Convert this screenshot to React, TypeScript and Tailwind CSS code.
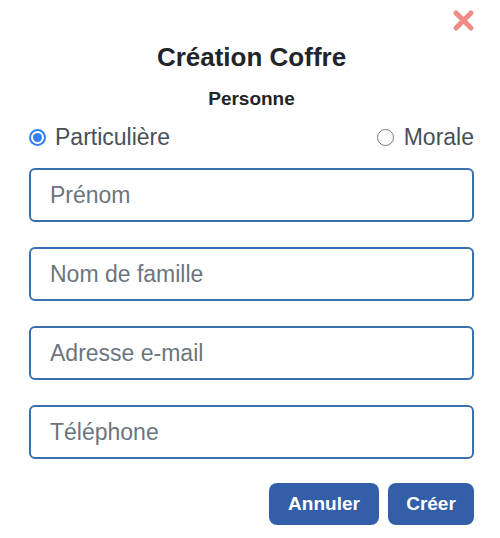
import React from "react";

const font = { fontFamily: '"Liberation Sans", Arial, Helvetica, sans-serif' };

function Field({ placeholder, first }: { placeholder: string; first?: boolean }) {
  return (
    <input
      type="text"
      placeholder={placeholder}
      className={`${first ? "" : "mt-[25px]"} block w-full h-[54px] border-2 border-[#3b70b0] rounded-[6px] pl-[19px] pr-[19px] text-[23px] text-[#212529] placeholder:text-[#6c757d] outline-none bg-white`}
      style={font}
    />
  );
}

export default function App() {
  const [kind, setKind] = React.useState<"p" | "m">("p");
  return (
    <div className="relative w-[500px] h-[538px] bg-white pl-[29px] pr-[26px]" style={font}>
      <button
        aria-label="Fermer"
        className="absolute top-[9px] right-[25px] w-[23px] h-[23px] flex items-center justify-center"
      >
        <svg width="23" height="23" viewBox="0 0 23 23">
          <path d="M4 4 L19 19 M19 4 L4 19" stroke="#f28a86" strokeWidth="5" strokeLinecap="round" />
        </svg>
      </button>
      <h2 className="pt-[41px] text-[26px] leading-[32px] font-bold text-[#212529] text-center">
        Création Coffre
      </h2>
      <div className="mt-[14px] text-[19px] leading-[24px] font-bold text-[#212529] text-center">
        Personne
      </div>
      <div className="mt-[12px] h-[28px] flex items-center justify-between text-[23px] leading-[28px] text-[#495057]">
        <label className="flex items-center gap-[9px] cursor-pointer" onClick={() => setKind("p")}>
          <span
            className={`w-[17px] h-[17px] rounded-full flex items-center justify-center ${
              kind === "p" ? "border-2 border-[#3380f5]" : "border border-[#7a7a7a]"
            }`}
          >
            {kind === "p" && <span className="w-[9px] h-[9px] rounded-full bg-[#3380f5]" />}
          </span>
          <span>Particulière</span>
        </label>
        <label className="flex items-center gap-[10px] cursor-pointer" onClick={() => setKind("m")}>
          <span
            className={`w-[17px] h-[17px] rounded-full flex items-center justify-center ${
              kind === "m" ? "border-2 border-[#3380f5]" : "border border-[#7a7a7a]"
            }`}
          >
            {kind === "m" && <span className="w-[9px] h-[9px] rounded-full bg-[#3380f5]" />}
          </span>
          <span>Morale</span>
        </label>
      </div>
      <div className="mt-[17px]">
        <Field placeholder="Prénom" first />
        <Field placeholder="Nom de famille" />
        <Field placeholder="Adresse e-mail" />
        <Field placeholder="Téléphone" />
      </div>
      <div className="mt-[24px] flex justify-end gap-[9px]">
        <button className="h-[42px] w-[110px] rounded-[8px] bg-[#335fa8] text-white font-bold text-[19px]">
          Annuler
        </button>
        <button className="h-[42px] w-[86px] rounded-[8px] bg-[#335fa8] text-white font-bold text-[19px]">
          Créer
        </button>
      </div>
    </div>
  );
}
